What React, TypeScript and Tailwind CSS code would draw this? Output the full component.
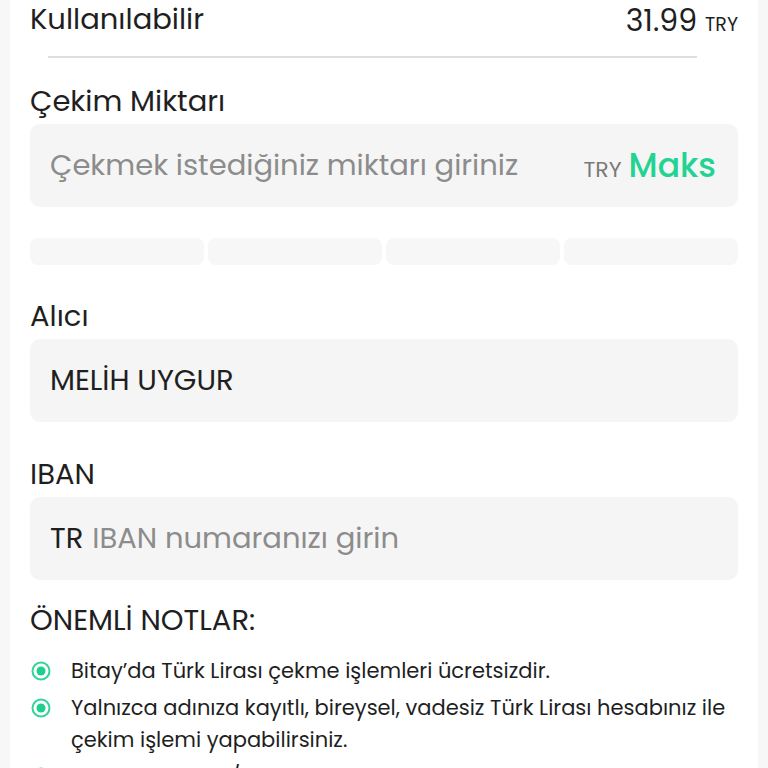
import type React from "react";

const font = { fontFamily: "Poppins, Inter, 'Noto Sans', sans-serif" };

const Field = ({ children }: { children: React.ReactNode }) => (
	<div className="flex h-[83px] items-center rounded-[10px] bg-[#f5f5f5] pl-[20px] pr-[22px]">
		{children}
	</div>
);

const Label = ({ children }: { children: React.ReactNode }) => (
	<div className="flex h-[44px] items-center text-[29px] text-[#1f1f1f]">
		{children}
	</div>
);

const Radio = () => (
	<svg width="20" height="20" viewBox="0 0 20 20" className="shrink-0">
		<circle cx="10" cy="10" r="8.5" fill="none" stroke="#34d39e" strokeWidth="2" />
		<circle cx="10" cy="10" r="4.5" fill="#1fcf8e" />
	</svg>
);

const Note = ({ children }: { children: React.ReactNode }) => (
	<li className="flex gap-[20px]">
		<div className="flex h-[32px] items-center pl-[1px]">
			<Radio />
		</div>
		<p className="text-[21px] leading-[32px] text-[#1f1f1f]">{children}</p>
	</li>
);

export default function App() {
	return (
		<div className="min-h-screen bg-[#f7f7f7] px-[10px]" style={font}>
			<div className="bg-white px-[20px] pb-10">
				<div className="flex h-[40px] items-center justify-between">
					<span className="text-[29px] text-[#1f1f1f]">Kullanılabilir</span>
					<span className="flex items-baseline gap-[8px] text-[#1f1f1f]">
						<span className="text-[30px]">31.99</span>
						<span className="text-[19px]">TRY</span>
					</span>
				</div>
				<div className="ml-[18px] mr-[41px] mt-[16px] h-[2px] bg-[#dedede]" />

				<div className="mt-[22px]">
					<Label>Çekim Miktarı</Label>
				</div>
				<Field>
					<span className="flex-1 text-[29px] text-[#8c8c8c]">
						Çekmek istediğiniz miktarı giriniz
					</span>
					<span className="flex items-baseline gap-[7px]">
						<span className="text-[22px] text-[#7a7a7a]">TRY</span>
						<span className="text-[33px] font-medium text-[#22d391]">Maks</span>
					</span>
				</Field>

				<div className="mt-[31px] grid h-[27px] grid-cols-4 gap-[4px]">
					<div className="rounded-[8px] bg-[#f7f7f7]" />
					<div className="rounded-[8px] bg-[#f7f7f7]" />
					<div className="rounded-[8px] bg-[#f7f7f7]" />
					<div className="rounded-[8px] bg-[#f7f7f7]" />
				</div>

				<div className="mt-[30px]">
					<Label>Alıcı</Label>
				</div>
				<Field>
					<span className="text-[29px] text-[#1f1f1f]">MELİH UYGUR</span>
				</Field>

				<div className="mt-[31px]">
					<Label>IBAN</Label>
				</div>
				<Field>
					<span className="text-[29px] text-[#1f1f1f]">TR</span>
					<span className="ml-[9px] text-[29px] text-[#8c8c8c]">
						IBAN numaranızı girin
					</span>
				</Field>

				<div className="mt-[19px]">
					<Label>ÖNEMLİ NOTLAR:</Label>
				</div>
				<ul className="mt-[12px] flex flex-col gap-[5px]">
					<Note>Bitay’da Türk Lirası çekme işlemleri ücretsizdir.</Note>
					<Note>
						Yalnızca adınıza kayıtlı, bireysel, vadesiz Türk Lirası hesabınız ile
						çekim işlemi yapabilirsiniz.
					</Note>
					<Note>Hesabınızdan 7/24 Türk Lirası çekebilirsiniz.</Note>
				</ul>
			</div>
		</div>
	);
}
